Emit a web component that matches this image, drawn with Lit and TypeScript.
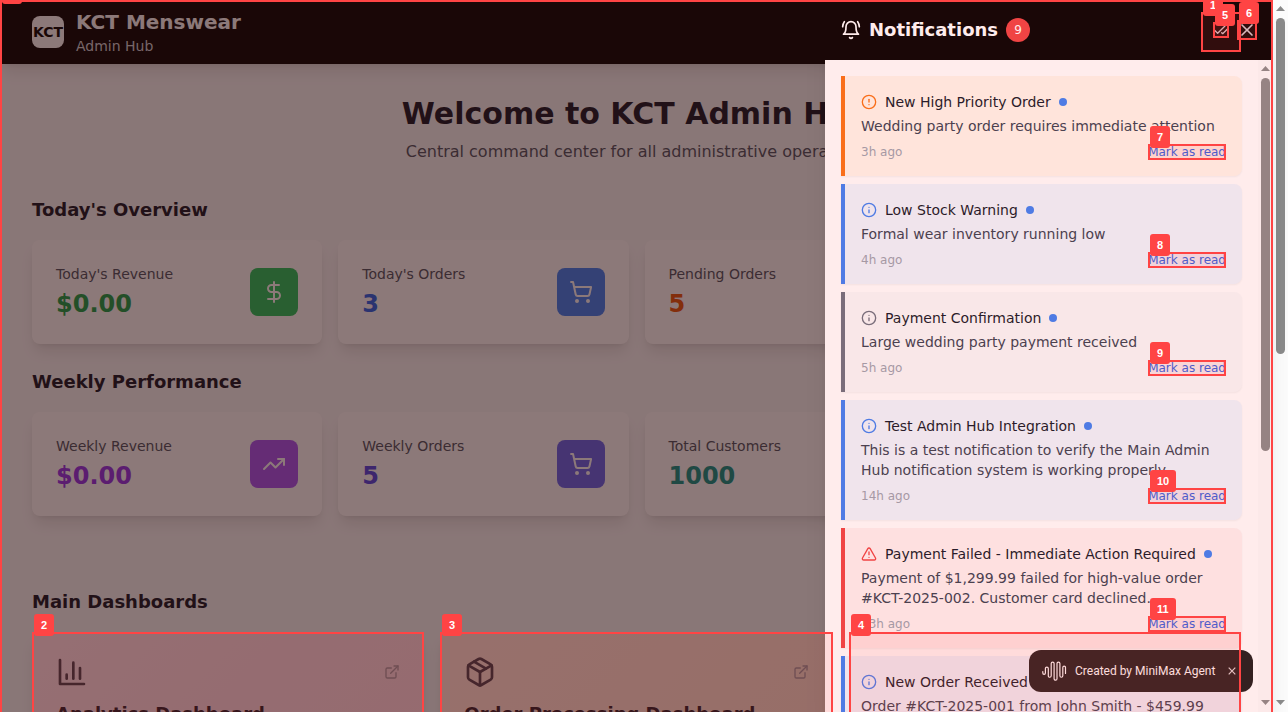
import { LitElement, html, svg, css } from "lit";
import { customElement, property } from "lit/decorators.js";

const ICONS: Record<string, unknown> = {
  dollar: svg`<line x1="12" x2="12" y1="2" y2="22"/><path d="M17 5H9.5a3.5 3.5 0 0 0 0 7h5a3.5 3.5 0 0 1 0 7H6"/>`,
  cart: svg`<circle cx="8" cy="21" r="1"/><circle cx="19" cy="21" r="1"/><path d="M2.05 2.05h2l2.66 12.42a2 2 0 0 0 2 1.58h9.78a2 2 0 0 0 1.95-1.57l1.65-7.43H5.12"/>`,
  trend: svg`<polyline points="22 7 13.5 15.5 8.5 10.5 2 17"/><polyline points="16 7 22 7 22 13"/>`,
  clock: svg`<circle cx="12" cy="12" r="10"/><polyline points="12 6 12 12 16 14"/>`,
  bars: svg`<path d="M3 3v18h18"/><path d="M18 17V9"/><path d="M13 17V5"/><path d="M8 17v-3"/>`,
  box: svg`<path d="m7.5 4.27 9 5.15"/><path d="M21 8a2 2 0 0 0-1-1.73l-7-4a2 2 0 0 0-2 0l-7 4A2 2 0 0 0 3 8v8a2 2 0 0 0 1 1.73l7 4a2 2 0 0 0 2 0l7-4A2 2 0 0 0 21 16Z"/><path d="m3.3 7 8.7 5 8.7-5"/><path d="M12 22V12"/>`,
  link: svg`<path d="M15 3h6v6"/><path d="M10 14 21 3"/><path d="M18 13v6a2 2 0 0 1-2 2H5a2 2 0 0 1-2-2V8a2 2 0 0 1 2-2h6"/>`,
  bell: svg`<path d="M6 8a6 6 0 0 1 12 0c0 7 3 9 3 9H3s3-2 3-9"/><path d="M10.3 21a1.94 1.94 0 0 0 3.4 0"/><path d="M4 2C2.8 3.7 2 5.7 2 8"/><path d="M22 8c0-2.3-.8-4.3-2-6"/>`,
  checks: svg`<path d="M18 6 7 17l-5-5"/><path d="m22 10-7.5 7.5L13 16"/>`,
  x: svg`<path d="M18 6 6 18"/><path d="m6 6 12 12"/>`,
  alert: svg`<circle cx="12" cy="12" r="10"/><line x1="12" x2="12" y1="8" y2="12"/><line x1="12" x2="12.01" y1="16" y2="16"/>`,
  info: svg`<circle cx="12" cy="12" r="10"/><path d="M12 16v-4"/><path d="M12 8h.01"/>`,
  warn: svg`<path d="m21.73 18-8-14a2 2 0 0 0-3.48 0l-8 14A2 2 0 0 0 4 21h16a2 2 0 0 0 1.73-3"/><path d="M12 9v4"/><path d="M12 17h.01"/>`,
};

@customElement("ui-icon")
class UiIcon extends LitElement {
  @property() name = "";
  @property({ type: Number }) size = 16;
  static styles = css`
    :host { display: block; flex: none; line-height: 0; }
    svg { display: block; fill: none; stroke: currentColor; stroke-width: 2; stroke-linecap: round; stroke-linejoin: round; }
  `;
  render() {
    return html`<svg width=${this.size} height=${this.size} viewBox="0 0 24 24">${ICONS[this.name]}</svg>`;
  }
}

@customElement("scroll-bar")
class ScrollBar extends LitElement {
  @property({ type: Number }) thumb = 100;
  static styles = css`
    :host { display: flex; flex: none; flex-direction: column; box-sizing: border-box; width: 15px; padding: 6px 3px 7px; background: #fcfcfc; }
    .up, .down { width: 9px; height: 5px; background: #8b8b8b; }
    .up { clip-path: polygon(50% 0, 100% 100%, 0 100%); }
    .down { clip-path: polygon(0 0, 100% 0, 50% 100%); margin-top: auto; }
    .thumb { width: 9px; margin-top: 7px; border-radius: 4.5px; background: #8b8b8b; }
  `;
  render() {
    return html`<div class="up"></div><div class="thumb" style="height:${this.thumb}px"></div><div class="down"></div>`;
  }
}

const today = [
  ["Today's Revenue", "$0.00", "green", "dollar"],
  ["Today's Orders", "3", "blue", "cart"],
  ["Pending Orders", "5", "orange", "clock"],
];
const weekly = [
  ["Weekly Revenue", "$0.00", "purple", "trend"],
  ["Weekly Orders", "5", "indigo", "cart"],
  ["Total Customers", "1000", "teal", "clock"],
];
const notes = [
  ["high", "alert", "New High Priority Order", "Wedding party order requires immediate attention", "3h ago"],
  ["info", "info", "Low Stock Warning", "Formal wear inventory running low", "4h ago"],
  ["low", "info", "Payment Confirmation", "Large wedding party payment received", "5h ago"],
  ["info", "info", "Test Admin Hub Integration", "This is a test notification to verify the Main Admin Hub notification system is working properly.", "14h ago"],
  ["urgent", "warn", "Payment Failed - Immediate Action Required", "Payment of $1,299.99 failed for high-value order #KCT-2025-002. Customer card declined.", "13h ago"],
  ["info", "info", "New Order Received", "Order #KCT-2025-001 from John Smith - $459.99", "13h ago"],
];
// Highlighted regions: left, top, width, height
const marks = [
  [0, 0, 1273, 760], [1201, 12, 40, 40], [32, 632, 392, 200], [440, 632, 393, 200], [849, 632, 392, 200],
  [1213, 22, 16, 16], [1237, 20, 20, 20], [1148, 144, 78, 16], [1148, 252, 78, 16], [1148, 360, 78, 16],
  [1148, 488, 78, 16], [1148, 616, 78, 16],
];

@customElement("app-root")
class AppRoot extends LitElement {
  static styles = css`
    :host { display: flex; position: relative; width: 1288px; height: 712px; overflow: hidden; font: 14px/20px "DejaVu Sans", sans-serif; color: #111827; }
    * { box-sizing: border-box; }
    h1, h2, h3, p { margin: 0; }
    .page { flex: 1; min-width: 0; height: 712px; overflow: hidden; background: #f9fafb; }
    .top { height: 64px; padding: 0 32px; display: flex; align-items: center; gap: 12px; background: #000; color: #fff; box-shadow: 0 10px 15px -3px rgba(0,0,0,.1), 0 4px 6px -4px rgba(0,0,0,.1); }
    .logo { width: 32px; height: 32px; border-radius: 8px; background: #fff; color: #000; font-weight: 700; display: flex; align-items: center; justify-content: center; }
    .brand { font-size: 20px; line-height: 28px; font-weight: 700; }
    .sub { color: #d1d5db; }
    main { padding: 32px; }
    .hero { text-align: center; margin-bottom: 32px; }
    h1 { font-size: 30px; line-height: 36px; font-weight: 700; margin-bottom: 8px; }
    .hero p { font-size: 16px; line-height: 24px; color: #4b5563; }
    h2 { font-size: 18px; line-height: 28px; font-weight: 700; margin-bottom: 16px; }
    .stats { display: grid; grid-template-columns: repeat(4, 1fr); gap: 16px; margin-bottom: 24px; }
    .stats.last { margin-bottom: 72px; }
    .stat { height: 104px; padding: 24px; border-radius: 8px; background: #fff; display: flex; align-items: center; justify-content: space-between; box-shadow: 0 10px 15px -3px rgba(0,0,0,.1), 0 4px 6px -4px rgba(0,0,0,.1); }
    .stat p { color: #4b5563; margin-bottom: 4px; }
    .value { font-size: 24px; line-height: 32px; font-weight: 700; }
    .tile { width: 48px; height: 48px; border-radius: 8px; color: #fff; display: flex; align-items: center; justify-content: center; }
    .value.green { color: #16a34a; } .tile.green { background: #22c55e; }
    .value.blue { color: #2563eb; } .tile.blue { background: #3b82f6; }
    .value.orange { color: #ea580c; } .tile.orange { background: #f97316; }
    .value.purple { color: #9333ea; } .tile.purple { background: #a855f7; }
    .value.indigo { color: #4f46e5; } .tile.indigo { background: #6366f1; }
    .value.teal { color: #0d9488; } .tile.teal { background: #14b8a6; }
    .boards { display: grid; grid-template-columns: repeat(3, 1fr); gap: 16px; }
    .board { height: 200px; padding: 24px; border-radius: 8px; box-shadow: 0 10px 15px -3px rgba(0,0,0,.1), 0 4px 6px -4px rgba(0,0,0,.1); }
    .board.a { background: linear-gradient(135deg, #faf5ff, #fce7f3); }
    .board.b { background: linear-gradient(135deg, #fff7ed, #fef2e2); }
    .row { display: flex; align-items: center; justify-content: space-between; margin-bottom: 12px; color: #374151; }
    .row .ext { color: #9ca3af; }
    h3 { font-size: 18px; line-height: 28px; font-weight: 700; }
    .shade { position: absolute; inset: 0 15px 0 0; background: rgba(0,0,0,.5); }
    .drawer { position: absolute; top: 0; bottom: 0; right: 15px; width: 448px; display: flex; flex-direction: column; background: #fff; box-shadow: 0 20px 25px -5px rgba(0,0,0,.1), 0 8px 10px -6px rgba(0,0,0,.1); }
    .dhead { height: 60px; flex: none; padding: 0 16px; display: flex; align-items: center; gap: 8px; background: #000; color: #fff; }
    .dhead h2 { margin: 0; }
    .count { width: 24px; height: 24px; border-radius: 12px; background: #ef4444; font-size: 12px; display: flex; align-items: center; justify-content: center; }
    .acts { margin-left: auto; display: flex; align-items: center; gap: 8px; color: #d1d5db; }
    .dbody { flex: 1; min-height: 0; display: flex; }
    .list { flex: 1; min-width: 0; overflow: hidden; padding: 16px; display: flex; flex-direction: column; gap: 8px; }
    .note { flex: none; padding: 16px; border-left: 4px solid; border-radius: 0 8px 8px 0; box-shadow: 0 1px 2px rgba(0,0,0,.05); }
    .note.high { border-color: #f97316; background: #fff7ed; } .high .kind { color: #f97316; }
    .note.info { border-color: #3b82f6; background: #eff6ff; } .info .kind { color: #3b82f6; }
    .note.low { border-color: #6b7280; background: #f9fafb; } .low .kind { color: #6b7280; }
    .note.urgent { border-color: #ef4444; background: #fef2f2; } .urgent .kind { color: #ef4444; }
    .nt { display: flex; align-items: center; gap: 8px; margin-bottom: 4px; }
    .dot { width: 8px; height: 8px; border-radius: 4px; background: #3b82f6; }
    .note p { color: #374151; margin-bottom: 8px; }
    .foot { display: flex; justify-content: space-between; font-size: 12px; line-height: 16px; color: #9ca3af; }
    .foot .read { color: #2563eb; }
    .pill { position: absolute; left: 1029px; top: 650px; width: 224px; height: 42px; border-radius: 12px; background: #1e1e1e; color: #fff; display: flex; align-items: center; padding: 0 17px 0 12px; font: 12px/16px Roboto, sans-serif; }
    .pill .wave { flex: none; margin-right: 8px; }
    .pill .text { white-space: nowrap; }
    .pill .close { margin-left: auto; color: #ddd; }
    .mark { position: absolute; border: 2px solid #ff4444; background: rgba(255,68,68,.1); pointer-events: none; }
    .tag { position: absolute; left: 0; top: -20px; height: 22px; padding: 0 7px; border-radius: 3px; background: #ff4444; color: #fff; font: 700 11px/22px "Liberation Sans", sans-serif; }
    scroll-bar.outer { height: 712px; }
  `;

  stats(rows: string[][], last = false) {
    return html`<div class="stats ${last ? "last" : ""}">${rows.map(([label, value, tone, icon]) => html`
      <div class="stat">
        <div><p>${label}</p><div class="value ${tone}">${value}</div></div>
        <div class="tile ${tone}"><ui-icon name=${icon} size="24"></ui-icon></div>
      </div>`)}</div>`;
  }

  board(kind: string, icon: string, title: string) {
    return html`<div class="board ${kind}">
      <div class="row"><ui-icon name=${icon} size="32"></ui-icon><ui-icon class="ext" name="link" size="16"></ui-icon></div>
      <h3>${title}</h3>
    </div>`;
  }

  render() {
    return html`
      <div class="page">
        <header class="top">
          <div class="logo">KCT</div>
          <div><div class="brand">KCT Menswear</div><div class="sub">Admin Hub</div></div>
        </header>
        <main>
          <div class="hero"><h1>Welcome to KCT Admin Hub</h1><p>Central command center for all administrative operations</p></div>
          <h2>Today's Overview</h2>
          ${this.stats(today)}
          <h2>Weekly Performance</h2>
          ${this.stats(weekly, true)}
          <h2>Main Dashboards</h2>
          <div class="boards">
            ${this.board("a", "bars", "Analytics Dashboard")}
            ${this.board("b", "box", "Order Processing Dashboard")}
          </div>
        </main>
      </div>
      <scroll-bar class="outer" thumb="336"></scroll-bar>
      <div class="shade"></div>
      <aside class="drawer">
        <div class="dhead">
          <ui-icon name="bell" size="20"></ui-icon>
          <h2>Notifications</h2>
          <span class="count">9</span>
          <div class="acts"><ui-icon name="checks" size="16"></ui-icon><ui-icon name="x" size="20"></ui-icon></div>
        </div>
        <div class="dbody">
          <div class="list">${notes.map(([kind, icon, title, text, time]) => html`
            <div class="note ${kind}">
              <div class="nt"><ui-icon class="kind" name=${icon} size="16"></ui-icon><span>${title}</span><span class="dot"></span></div>
              <p>${text}</p>
              <div class="foot"><span>${time}</span><span class="read">Mark as read</span></div>
            </div>`)}</div>
          <scroll-bar thumb="373"></scroll-bar>
        </div>
      </aside>
      <div class="pill">
        <svg class="wave" width="26" height="24" viewBox="0 0 26 24" fill="none" stroke="#fff" stroke-width="1.2" stroke-linecap="round">
          <path d="M1.8 12.5v1.6a1.3 1.3 0 0 0 2.6 0V9.5a1.45 1.45 0 0 1 2.9 0v7.3a1.45 1.45 0 0 0 2.9 0V4.5a1.45 1.45 0 0 1 2.9 0v15.2a1.45 1.45 0 0 0 2.9 0V4.5a1.45 1.45 0 0 1 2.9 0v12.3a1.45 1.45 0 0 0 2.9 0V8.5a1.35 1.35 0 0 1 2.7 0v6"/>
        </svg>
        <span class="text">Created by MiniMax Agent</span>
        <svg class="close" width="8" height="8" viewBox="0 0 8 8" stroke="currentColor" stroke-width="1.2"><path d="M.7.7l6.6 6.6M7.3.7L.7 7.3"/></svg>
      </div>
      ${marks.map(([x, y, w, h], i) => html`<div class="mark" style="left:${x}px;top:${y}px;width:${w}px;height:${h}px"><span class="tag">${i}</span></div>`)}
    `;
  }
}
